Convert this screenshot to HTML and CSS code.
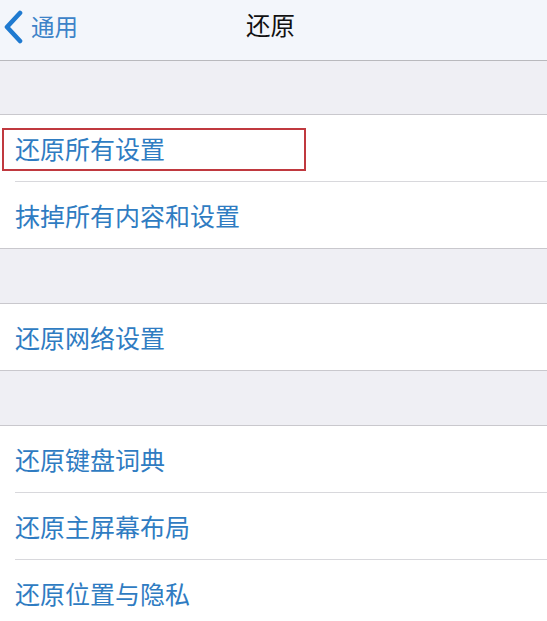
FILE: index.html
```html
<!DOCTYPE html>
<html lang="zh-CN">
<head>
<meta charset="utf-8">
<title>还原</title>
<link rel="stylesheet" href="styles.css">
</head>
<body>
<header class="nav">
  <div class="back">
    <svg class="chev" width="24" height="34" viewBox="0 0 24 34"><path d="M19 3 L6 17 L19 31" fill="none" stroke="#1f7ad0" stroke-width="4.6" stroke-linecap="round" stroke-linejoin="round"/></svg>
    <span class="back-text">通用</span>
  </div>
  <div class="title">还原</div>
</header>
<div class="gap"></div>
<section class="group">
  <div class="row"><span class="label boxed">还原所有设置</span></div>
  <div class="row"><span class="label">抹掉所有内容和设置</span></div>
</section>
<div class="gap"></div>
<section class="group">
  <div class="row"><span class="label">还原网络设置</span></div>
</section>
<div class="gap"></div>
<section class="group">
  <div class="row"><span class="label">还原键盘词典</span></div>
  <div class="row"><span class="label">还原主屏幕布局</span></div>
  <div class="row"><span class="label">还原位置与隐私</span></div>
</section>
</body>
</html>
```
FILE: styles.css
```css
* { box-sizing: border-box; }
html, body { margin: 0; padding: 0; }
body {
  width: 547px;
  height: 621px;
  overflow: hidden;
  background: #efeff4;
  font-family: "Noto Sans CJK SC", "Noto Sans", sans-serif;
}
.nav {
  height: 61px;
  background: #f3f6fb;
  border-bottom: 1px solid #b9b9bd;
  position: relative;
  display: flex;
  align-items: center;
  justify-content: center;
}
.back {
  position: absolute;
  left: 1px;
  top: 10px;
  display: flex;
  align-items: center;
}
.chev { display: block; }
.back-text {
  color: #3c83c8;
  font-size: 23.5px;
  line-height: 32px;
  margin-left: 6px;
  margin-top: -2px;
}
.title {
  font-size: 24.5px;
  color: #111;
  line-height: 32px;
  margin-top: -10px;
  margin-left: -6px;
}
.gap { height: 53px; }
.group {
  background: #fff;
  border-top: 1px solid #c9c8cd;
  border-bottom: 1px solid #c9c8cd;
}
.group + .gap { height: 54px; }
.row {
  height: 67px;
  margin-left: 15px;
  display: flex;
  align-items: center;
  border-bottom: 1px solid #d8d8dc;
  position: relative;
}
.row:last-child { border-bottom: none; height: 66px; }
.label {
  font-size: 25px;
  color: #2f7cc2;
  line-height: 34px;
  padding-bottom: 1px;
}
.boxed::after {
  content: "";
  position: absolute;
  left: -13px;
  top: 13px;
  width: 300px;
  height: 39px;
  border: 2px solid #c0393f;
}
```
